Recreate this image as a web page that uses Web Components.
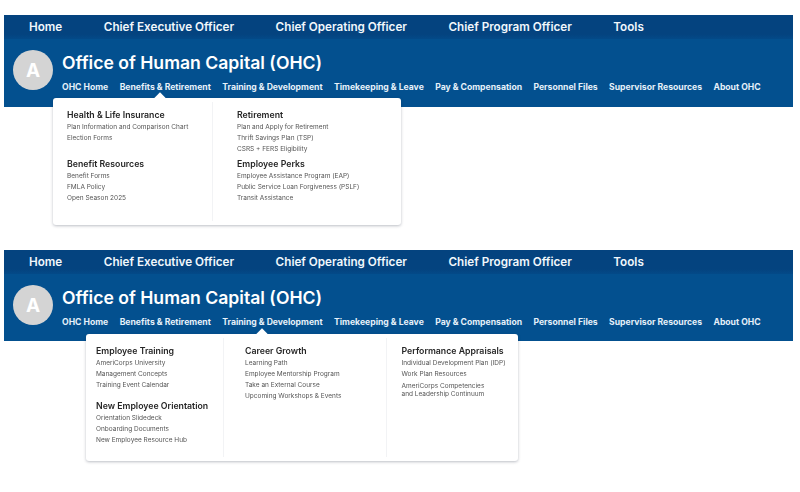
<!DOCTYPE html>
<html lang="en">
<head>
<meta charset="utf-8">
<title>Office of Human Capital</title>
<style>
  html, body { margin:0; background:#fff; }
  body {
    font-family:Inter, "Liberation Sans", sans-serif;
    display:flex;
    flex-direction:column;
    gap:143px;
    box-sizing:border-box;
    height:492px;
    padding:15px 7px 0 4px;
    overflow:hidden;
  }
</style>
</head>
<body>

<ohc-banner>
  <ohc-menu style="--top:83px;--left:49px;--width:348px;--height:127px;--caret:103px;--cols:159px 1fr;">
    <ohc-col pad="14">
      <ohc-group title="Health &amp; Life Insurance">
        <a>Plan Information and Comparison Chart</a>
        <a>Election Forms</a>
      </ohc-group>
      <ohc-group title="Benefit Resources" style="margin-top:14px">
        <a>Benefit Forms</a>
        <a>FMLA Policy</a>
        <a>Open Season 2025</a>
      </ohc-group>
    </ohc-col>
    <ohc-col pad="25" divider>
      <ohc-group title="Retirement">
        <a>Plan and Apply for Retirement</a>
        <a>Thrift Savings Plan (TSP)</a>
        <a>CSRS + FERS Eligibility</a>
      </ohc-group>
      <ohc-group title="Employee Perks" style="margin-top:3px">
        <a>Employee Assistance Program (EAP)</a>
        <a>Public Service Loan Forgiveness (PSLF)</a>
        <a>Transit Assistance</a>
      </ohc-group>
    </ohc-col>
  </ohc-menu>
</ohc-banner>

<ohc-banner style="height:91px">
  <ohc-menu style="--top:84px;--left:82px;--width:432px;--height:127px;--caret:172px;--cols:137px 163px 1fr;">
    <ohc-col pad="10">
      <ohc-group title="Employee Training">
        <a>AmeriCorps University</a>
        <a>Management Concepts</a>
        <a>Training Event Calendar</a>
      </ohc-group>
      <ohc-group title="New Employee Orientation" style="margin-top:9px">
        <a>Orientation Slidedeck</a>
        <a>Onboarding Documents</a>
        <a>New Employee Resource Hub</a>
      </ohc-group>
    </ohc-col>
    <ohc-col pad="22" divider>
      <ohc-group title="Career Growth">
        <a>Learning Path</a>
        <a>Employee Mentorship Program</a>
        <a>Take an External Course</a>
        <a>Upcoming Workshops &amp; Events</a>
      </ohc-group>
    </ohc-col>
    <ohc-col pad="15.5" divider>
      <ohc-group title="Performance Appraisals">
        <a>Individual Development Plan (IDP)</a>
        <a>Work Plan Resources</a>
        <a class="two">AmeriCorps Competencies<br>and Leadership Continuum</a>
      </ohc-group>
    </ohc-col>
  </ohc-menu>
</ohc-banner>

<script>
// Blue site banner: top bar, office title row, sub nav. The dropdown is slotted.
class OhcBanner extends HTMLElement {
  connectedCallback() {
    const top = ['Home', 'Chief Executive Officer', 'Chief Operating Officer', 'Chief Program Officer', 'Tools'];
    const sub = ['OHC Home', 'Benefits & Retirement', 'Training & Development', 'Timekeeping & Leave',
      'Pay & Compensation', 'Personnel Files', 'Supervisor Resources', 'About OHC'];
    this.attachShadow({ mode: 'open' });
    this.shadowRoot.innerHTML = `
      <style>
        :host {
          display:block;
          position:relative;
          flex:none;
          height:92px;
          background:#03508f;
          color:#fff;
          filter:blur(0.3px);
        }
        .top {
          display:flex;
          align-items:center;
          gap:41.5px;
          height:24px;
          padding-left:25px;
          background:linear-gradient(#04437f 80%, #034a88);
          font-size:11.7px;
          font-weight:600;
          color:#f1f7fc;
        }
        .main {
          display:flex;
          align-items:flex-start;
          gap:9px;
          padding:11px 0 0 9px;
        }
        .logo {
          flex:none;
          display:flex;
          align-items:center;
          justify-content:center;
          width:40px;
          height:40px;
          border-radius:50%;
          background:#d4d4d4;
          font-size:19px;
          font-weight:700;
          color:#fff;
        }
        h1 {
          margin:2px 0 0;
          font-size:17.6px;
          line-height:22px;
          font-weight:600;
        }
        nav {
          display:flex;
          gap:11.4px;
          margin-top:7px;
          font-size:8.65px;
          line-height:12px;
          font-weight:700;
          white-space:nowrap;
          color:#e6f1fa;
        }
      </style>
      <div class="top">${top.map(t => `<span>${t.replace('&', '&amp;')}</span>`).join('')}</div>
      <div class="main">
        <div class="logo">A</div>
        <div>
          <h1>Office of Human Capital (OHC)</h1>
          <nav>${sub.map(t => `<span>${t.replace('&', '&amp;')}</span>`).join('')}</nav>
        </div>
      </div>
      <slot></slot>
    `;
  }
}

// White dropdown panel that hangs over the banner edge
class OhcMenu extends HTMLElement {
  connectedCallback() {
    this.attachShadow({ mode: 'open' });
    this.shadowRoot.innerHTML = `
      <style>
        :host {
          position:absolute;
          top:var(--top);
          left:var(--left);
          width:var(--width);
          height:var(--height);
          display:grid;
          grid-template-columns:var(--cols);
          background:#fff;
          border-radius:3px;
          box-shadow:0 1px 3px rgba(30,40,60,0.3);
          color:#222;
        }
        .caret {
          position:absolute;
          top:-4px;
          left:var(--caret);
          width:8px;
          height:8px;
          background:#fff;
          transform:rotate(45deg);
        }
      </style>
      <div class="caret"></div>
      <slot></slot>
    `;
  }
}

// One column of the dropdown, with an optional hairline on its left
class OhcCol extends HTMLElement {
  connectedCallback() {
    this.attachShadow({ mode: 'open' });
    const pad = this.getAttribute('pad') || 14;
    this.shadowRoot.innerHTML = `
      <style>
        :host {
          display:block;
          position:relative;
          padding:11px 0 0 ${pad}px;
        }
        :host([divider])::before {
          content:'';
          position:absolute;
          left:0;
          top:4px;
          bottom:4px;
          border-left:1px solid #f2f3f5;
        }
      </style>
      <slot></slot>
    `;
  }
}

// Heading with its list of links. Links stay in the light DOM, so style via ::slotted
class OhcGroup extends HTMLElement {
  connectedCallback() {
    this.attachShadow({ mode: 'open' });
    this.shadowRoot.innerHTML = `
      <style>
        :host { display:block; }
        h3 {
          margin:0 0 1px;
          font-size:8.75px;
          line-height:12px;
          font-weight:600;
          color:#262626;
          white-space:nowrap;
        }
        ::slotted(a) {
          display:block;
          font-size:6.5px;
          line-height:11px;
          color:#555;
          white-space:nowrap;
        }
        ::slotted(a.two) { line-height:8px; padding-top:1.5px; }
      </style>
      <h3>${this.getAttribute('title').replace('&', '&amp;')}</h3>
      <slot></slot>
    `;
    this.removeAttribute('title');
  }
}

customElements.define('ohc-banner', OhcBanner);
customElements.define('ohc-menu', OhcMenu);
customElements.define('ohc-col', OhcCol);
customElements.define('ohc-group', OhcGroup);
</script>
</body>
</html>
